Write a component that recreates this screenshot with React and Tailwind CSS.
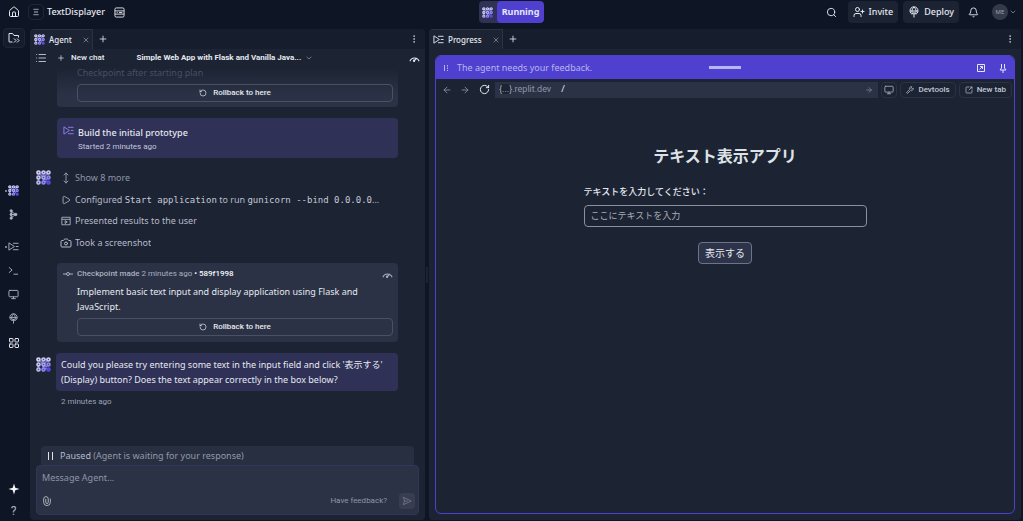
import {
  House, X, Plus, EllipsisVertical, List, ChevronDown, RotateCcw,
  MoveVertical, Play, Camera, Search, UserPlus, Bell, Monitor, LayoutGrid,
  ArrowLeft, ArrowRight, RotateCw, Wrench, SquareArrowOutUpRight,
} from "lucide-react";

const RINGS = [
  [4, 4, "#d5d7ea"], [12, 4, "#c9cbe8"], [20, 4, "#c9cbe8"],
  [4, 12, "#c9cbe8"], [12, 12, "#a9a7e6"], [20, 12, "#8f88ea"],
  [4, 20, "#b9bbe0"], [12, 20, "#8f88ea"], [20, 20, "#5a4be0"],
];

function AgentIcon({ className = "size-3" }) {
  return (
    <svg viewBox="0 0 24 24" className={className} fill="none" aria-hidden="true">
      <path d="M4 4l8 8M20 4l-8 8M12 12v8M12 12l8 8M4 12v8M12 4h8M12 20l8-8" stroke="#7b6ff0" strokeWidth="2.500" />
      {RINGS.map(([x, y, color]) => (
        <circle key={`${x}-${y}`} cx={x} cy={y} r="2.400" stroke={color} strokeWidth="2.600" fill="#4f40cf" />
      ))}
    </svg>
  );
}

function ProgressIcon({ className = "size-3" }) {
  return (
    <svg viewBox="0 0 24 24" className={className} fill="none" stroke="currentColor" strokeWidth="2" aria-hidden="true">
      <path d="M2 4v16l12-8zM11 5h12M17 12h6M11 19h12" />
    </svg>
  );
}

function DeployIcon({ className = "size-3" }) {
  return (
    <svg viewBox="0 0 24 24" className={className} fill="none" stroke="currentColor" strokeWidth="2" aria-hidden="true">
      <path d="M8 16.5A8 8 0 1 1 16 16.5M4 10h16M12 2c-5 5-5 10-2 15M12 2c5 5 5 10 2 15M12 13v10M9 16l3-3 3 3" />
    </svg>
  );
}

function GaugeIcon({ className = "size-2.5" }) {
  return (
    <svg viewBox="0 0 24 24" className={className} fill="none" stroke="currentColor" strokeWidth="2.200" aria-hidden="true">
      <path d="M2 18A10.500 10.500 0 0 1 22 18M11 17l6-6" />
      <circle cx="11" cy="17" r="1.500" />
    </svg>
  );
}

function StackIcon({ className = "size-3" }) {
  return (
    <svg viewBox="0 0 24 24" className={className} fill="none" stroke="currentColor" strokeWidth="2" aria-hidden="true">
      <rect x="2" y="2" width="20" height="20" rx="3" />
      <path d="M2 8.500h20M2 15.500h20M6 12h2M11 12h7" />
    </svg>
  );
}

function IconButton({ label, className = "", children }) {
  return (
    <button type="button" aria-label={label} className={`flex shrink-0 items-center justify-center ${className}`}>
      {children}
    </button>
  );
}

function Header() {
  return (
    <header className="grid h-6 grid-cols-[1fr_auto_1fr] items-center font-['Noto_Sans',sans-serif]">
      <div className="flex items-center pl-2">
        <IconButton label="Home" className="size-3"><House className="size-3" /></IconButton>
        <span className="ml-2 flex size-4 items-center justify-center rounded-sm border border-[#1f2636] text-[#7b8296]">
          <svg viewBox="0 0 12 12" className="size-2" fill="none" stroke="currentColor" strokeWidth="2"><path d="M2 2h8M3 6h6M2 10h8" /></svg>
        </span>
        <h1 className="ml-[3px] text-[9px] font-medium">TextDisplayer</h1>
        <IconButton label="Storage" className="ml-2 size-3"><StackIcon className="size-[11px]" /></IconButton>
      </div>
      <div className="flex h-[22px] overflow-hidden rounded bg-[#2f3157]">
        <IconButton label="Agent" className="w-[18px]"><AgentIcon className="size-[11px]" /></IconButton>
        <button type="button" className="rounded bg-[#4f40cf] px-[5px] text-[9px] font-bold text-[#e6e6fa]">Running</button>
      </div>
      <div className="flex items-center justify-end pr-1.5">
        <IconButton label="Search" className="size-3"><Search className="size-[11px]" /></IconButton>
        <button type="button" className="ml-2.5 flex h-[22px] items-center gap-1 rounded bg-[#1c2333] px-[5px] text-[9px] font-medium"><UserPlus className="size-3" />Invite</button>
        <button type="button" className="ml-[5px] flex h-[22px] items-center gap-1 rounded bg-[#1c2333] px-[5px] text-[9px] font-medium"><DeployIcon className="size-3" />Deploy</button>
        <IconButton label="Notifications" className="ml-2 size-3"><Bell className="size-[11px]" /></IconButton>
        <button type="button" aria-label="Account" className="ml-[13px] flex items-center gap-px text-[#9da2b3]">
          <span className="flex size-4 items-center justify-center rounded-full bg-[#353a4b] text-[6px]">ME</span>
          <ChevronDown className="size-2" />
        </button>
      </div>
    </header>
  );
}

function RailButton({ label, active, className = "h-6", children }) {
  return (
    <button type="button" aria-label={label} className={`flex w-full shrink-0 items-center justify-center gap-px text-[#aeb3c4] ${className}`}>
      <span className={`size-0.5 rounded-full ${active ? "bg-[#9da2b3]" : ""}`} />
      {children}
      <span className="size-0.5" />
    </button>
  );
}

function Rail() {
  return (
    <nav aria-label="Tools" className="flex w-[30px] shrink-0 flex-col pr-[3px]">
      <IconButton label="Files" className="ml-[3px] mt-1 h-5 w-[22px] rounded border border-[#1f2636] bg-[#151c2b]">
        <svg viewBox="0 0 24 24" className="size-3" fill="none" stroke="currentColor" strokeWidth="2"><path d="M9 20H3a1 1 0 0 1-1-1V3h7l3 4h9v4M12 13l4 4-4 4M18 13l4 4-4 4" /></svg>
      </IconButton>
      <div className="flex flex-1 flex-col justify-center pt-2">
        <RailButton label="Agent" active><AgentIcon className="size-[11px]" /></RailButton>
        <RailButton label="Integrations">
          <svg viewBox="0 0 24 24" className="size-[11px]" fill="none" stroke="currentColor" strokeWidth="2"><path d="M7 5v14M7 5l10 7-10 7M7 12h10" /><circle cx="7" cy="4" r="2.500" fill="currentColor" /><circle cx="7" cy="12" r="2.500" fill="currentColor" /><circle cx="7" cy="20" r="2.500" fill="currentColor" /><circle cx="17" cy="12" r="2.500" fill="currentColor" /></svg>
        </RailButton>
        <RailButton label="Progress" active className="mt-2 h-6"><ProgressIcon className="size-[11px]" /></RailButton>
        <RailButton label="Shell">
          <svg viewBox="0 0 24 24" className="size-[11px]" fill="none" stroke="currentColor" strokeWidth="2"><path d="M2 5l7 6-7 6M12 20h10" /></svg>
        </RailButton>
        <RailButton label="Preview"><Monitor className="size-[11px]" /></RailButton>
        <RailButton label="Deployments"><DeployIcon className="size-[11px]" /></RailButton>
        <RailButton label="All tools"><LayoutGrid className="size-3 text-[#dfe2ea]" /></RailButton>
      </div>
      <RailButton label="Assistant" className="h-6">
        <svg viewBox="0 0 24 24" className="size-3" fill="#f5f9fc"><path d="M12 1l2.500 8.500L23 12l-8.500 2.500L12 23l-2.500-8.500L1 12l8.500-2.500z" /></svg>
      </RailButton>
      <RailButton label="Help" className="h-5"><span className="text-[12px] leading-3">?</span></RailButton>
    </nav>
  );
}

function TabBar({ icon, label, menuLabel }) {
  return (
    <div className="flex h-5 shrink-0 items-stretch bg-[#161d2c]">
      <div className="flex items-center rounded-tl border-r border-t border-[#2b3245] bg-[#1c2333] pl-1">
        {icon}
        <span className="ml-1 font-['Noto_Sans',sans-serif] text-[8px] font-medium">{label}</span>
        <IconButton label={`Close ${label}`} className="ml-2 size-3 text-[#9da2b3]"><X className="size-2" /></IconButton>
      </div>
      <IconButton label="New tab" className="ml-1 w-3"><Plus className="size-2.5" /></IconButton>
      <IconButton label={menuLabel} className="ml-auto mr-[5px] w-3 text-[#c2c8cc]"><EllipsisVertical className="size-2.5" /></IconButton>
    </div>
  );
}

function Rollback() {
  return (
    <button type="button" className="flex h-[18px] w-full items-center justify-center gap-1.5 rounded-sm border border-[#4b5165] text-[8px] font-medium">
      <RotateCcw className="size-2" />Rollback to here
    </button>
  );
}

function Step({ icon, muted, children }) {
  return (
    <li className={`flex min-w-0 items-center gap-[3px] ${muted ? "text-[#8f95a8]" : "text-[#b6bac9]"}`}>
      <span className="flex w-3 shrink-0 justify-center">{icon}</span>
      <span className="truncate">{children}</span>
    </li>
  );
}

function AgentPane() {
  return (
    <section aria-label="Agent" className="flex min-w-0 flex-[395] flex-col overflow-hidden rounded bg-[#1c2333]">
      <TabBar icon={<AgentIcon className="size-[11px]" />} label="Agent" menuLabel="Agent pane menu" />
      <div className="flex h-[18px] shrink-0 items-center px-[5px] text-[8px] font-medium">
        <IconButton label="Chat list" className="size-3 text-[#b6bac9]"><List className="size-3" /></IconButton>
        <button type="button" className="ml-2.5 flex items-center gap-1.5"><Plus className="size-2" />New chat</button>
        <button type="button" className="ml-8 flex items-center gap-1 font-bold">Simple Web App with Flask and Vanilla Java...<ChevronDown className="size-2 text-[#9da2b3]" /></button>
        <IconButton label="Usage" className="ml-auto size-3"><GaugeIcon className="size-[11px]" /></IconButton>
      </div>

      <div className="flex min-h-0 flex-1 flex-col overflow-hidden pl-1.5 pr-[27px]">
        <article className="ml-[21px] rounded-b-sm bg-linear-to-b from-[#1c2333] to-[#2b3245] to-70% pb-[5px] pl-5 pr-[5px]">
          <p className="h-[17px] font-['Noto_Sans',sans-serif] text-[9px] leading-3 text-[#484f64]">Checkpoint after starting plan</p>
          <Rollback />
        </article>

        <article className="ml-[21px] mt-[11px] flex h-10 gap-1 rounded-sm bg-[#2f3157] px-1.5 pt-[7px]">
          <ProgressIcon className="size-[11px] shrink-0 text-[#8d87e8]" />
          <div>
            <h2 className="font-['Noto_Sans',sans-serif] text-[9px] font-medium leading-[15px]">Build the initial prototype</h2>
            <p className="text-[8px] leading-[14px] text-[#c2c8d8]">Started 2 minutes ago</p>
          </div>
        </article>

        <div className="mt-3 flex gap-[9px]">
          <AgentIcon className="size-[15px] shrink-0" />
          <ul className="grid h-[86px] min-w-0 flex-1 grid-rows-4 items-start font-['Noto_Sans',sans-serif] text-[9px] leading-4">
            <Step muted icon={<MoveVertical className="size-3" />}>Show 8 more</Step>
            <Step icon={<Play className="size-2.5" />}>Configured <code className="font-['DejaVu_Sans_Mono',monospace] text-[#c6cad8]">Start application</code> to run <code className="font-['DejaVu_Sans_Mono',monospace] text-[#c6cad8]">gunicorn --bind 0.0.0.0</code>...</Step>
            <Step icon={<svg viewBox="0 0 24 24" className="size-2.5" fill="none" stroke="currentColor" strokeWidth="2"><path d="M2 3h20v18H2zM2 8h20M10 11v7l5-3.500z" /></svg>}>Presented results to the user</Step>
            <Step icon={<Camera className="size-3" />}>Took a screenshot</Step>
          </ul>
        </div>

        <article className="ml-[21px] mt-[7px] h-[79px] rounded-sm bg-[#2b3245] pl-1.5 pr-[5px] pt-1">
          <div className="flex h-[14px] items-center gap-1 text-[8px] text-[#aab0c0]">
            <svg viewBox="0 0 10 10" className="size-2.5" fill="none" stroke="currentColor"><circle cx="5" cy="5" r="1.500" /><path d="M0 5h3.500M6.500 5H10" /></svg>
            <p><span className="font-medium">Checkpoint made</span> 2 minutes ago <span className="font-medium text-[#f5f9fc]">• 589f1998</span></p>
            <GaugeIcon className="ml-auto size-[11px]" />
          </div>
          <div className="pl-[14px]">
            <p className="mb-1 mt-[3px] font-['Noto_Sans',sans-serif] text-[9px] leading-[15px]">Implement basic text input and display application using Flask and JavaScript.</p>
            <Rollback />
          </div>
        </article>

        <div className="mt-[11px] flex gap-[5px]">
          <AgentIcon className="mt-1 size-[15px] shrink-0" />
          <p className="flex-1 rounded-sm bg-[#2f3157] px-[5px] py-1 font-['Noto_Sans','Noto_Sans_CJK_JP',sans-serif] text-[9px] leading-[15px]">
            Could you please try entering some text in the input field and click '表示する' (Display) button? Does the text appear correctly in the box below?
          </p>
        </div>
        <p className="ml-[25px] mt-1 text-[8px] leading-[14px] text-[#9da2b3]">2 minutes ago</p>
      </div>

      <div className="px-1.5 pb-[5px]">
        <div className="mx-[5px] flex h-[19px] items-center gap-[5px] rounded-t-sm bg-[#282f41] px-1.5 font-['Noto_Sans',sans-serif] text-[9px] text-[#9298ab]">
          <svg viewBox="0 0 8 8" className="size-2" stroke="#dfe2ea"><path d="M1.500 0v8M5.500 0v8" /></svg>
          <p><span className="text-[#b6bac9]">Paused</span> (Agent is waiting for your response)</p>
        </div>
        <form className="flex h-[50px] flex-col rounded border border-[#31355a] bg-[#2b3245] pl-[5px] pr-[3px] pt-[3px]">
          <input aria-label="Message Agent" placeholder="Message Agent..." className="h-4 bg-transparent font-['Noto_Sans',sans-serif] text-[9px] outline-none placeholder:text-[#8f95a8]" />
          <div className="mt-2 flex items-center">
            <IconButton label="Attach file" className="size-2.5 text-[#c2c8cc]">
              <svg viewBox="0 0 24 24" className="size-2.5" fill="none" stroke="currentColor" strokeWidth="2"><path d="M20 6v9a8 8 0 0 1-16 0V7a5 5 0 0 1 11 0v8a3 3 0 0 1-6 0V7" /></svg>
            </IconButton>
            <a href="#feedback" className="ml-auto text-[8px] text-[#8f95a8]">Have feedback?</a>
            <IconButton label="Send" className="ml-3 size-4 rounded-sm bg-[#383e50] text-[#757b8f]">
              <svg viewBox="0 0 24 24" className="size-2.5" fill="none" stroke="currentColor" strokeWidth="2"><path d="M3 3l19 9-19 9 3-9zM6 12h8" /></svg>
            </IconButton>
          </div>
        </form>
      </div>
    </section>
  );
}

function Preview() {
  return (
    <main className="flex flex-1 flex-col items-center px-4 pt-[45px] font-['Liberation_Sans','Noto_Sans_CJK_JP',sans-serif]">
      <h2 className="text-[16px] font-bold leading-6 text-[#dee2e6]">テキスト表示アプリ</h2>
      <div className="mt-[15px] w-[283px] max-w-full">
        <label htmlFor="entry" className="block text-[9px] font-medium leading-4">テキストを入力してください：</label>
        <input id="entry" placeholder="ここにテキストを入力" className="mt-[5px] block h-[22px] w-full rounded-sm border border-[#8b909c] bg-transparent px-1.5 text-[9px] outline-none placeholder:text-[#a9aeb9]" />
      </div>
      <button type="button" className="mt-[15px] h-[22px] rounded-sm border border-[#6d7388] bg-[#2d3349] px-1.5 text-[10px]">表示する</button>
    </main>
  );
}

function ProgressPane() {
  return (
    <section aria-label="Progress" className="flex min-w-0 flex-[592] flex-col overflow-hidden rounded bg-[#1c2333]">
      <TabBar icon={<ProgressIcon className="size-[11px]" />} label="Progress" menuLabel="Progress pane menu" />
      <div className="m-1.5 flex flex-1 flex-col overflow-hidden rounded-md border border-[#4f40cf]">
        <div className="grid h-[23px] shrink-0 grid-cols-[1fr_auto_1fr] items-center bg-[#4f40cf] px-1.5 font-['Noto_Sans',sans-serif] text-[9px] text-[#b9b5ee]">
          <div className="flex items-center gap-[7px]">
            <svg viewBox="0 0 8 8" className="size-2" fill="none" stroke="currentColor"><path d="M2.500 1v6" /><path d="M5.500 1v6" strokeDasharray="1.500 1" /></svg>
            The agent needs your feedback.
          </div>
          <span className="h-[3px] w-8 bg-[#b9b5ee]" />
          <div className="flex justify-end gap-3 text-[#e6e6fa]">
            <IconButton label="Open in pane" className="size-2.5">
              <svg viewBox="0 0 10 10" className="size-2.5" fill="none" stroke="currentColor"><path d="M1.500 1.500h7v7h-7zM3.500 6.500l3-3M4 3.500h2.500V6" /></svg>
            </IconButton>
            <IconButton label="Pin" className="size-2.5">
              <svg viewBox="0 0 10 10" className="size-2.5" fill="none" stroke="currentColor"><path d="M3.500 1v4L2 7h6L6.500 5V1M5 7v3" /></svg>
            </IconButton>
          </div>
        </div>
        <div className="flex h-[21px] shrink-0 items-center pl-1.5 pr-0.5 text-[8px] text-[#c2c8d8]">
          <IconButton label="Back" className="w-2.5 text-[#8f95a8]"><ArrowLeft className="size-2.5" /></IconButton>
          <IconButton label="Forward" className="ml-2 w-2.5 text-[#8f95a8]"><ArrowRight className="size-2.5" /></IconButton>
          <IconButton label="Reload" className="ml-2 w-3 text-[#f5f9fc]"><RotateCw className="size-[11px]" /></IconButton>
          <div className="ml-[5px] flex h-4 min-w-0 flex-1 items-center bg-[#2b3245] px-1 text-[9px]">
            <span className="text-[#8f95a8]"><span className="rounded-sm bg-[#1c2333] text-[#aab0c0]">{"{...}"}</span>.replit.dev</span>
            <input aria-label="Path" defaultValue="/" className="ml-2.5 min-w-0 flex-1 bg-transparent text-[#f5f9fc] outline-none" />
            <IconButton label="Go" className="size-2.5 text-[#8f95a8]"><ArrowRight className="size-2" /></IconButton>
          </div>
          <IconButton label="Device size" className="ml-[3px] size-4 rounded border border-[#2b3245] text-[#aab0c0]"><Monitor className="size-2.5" /></IconButton>
          <button type="button" className="ml-[3px] flex h-4 items-center gap-1 rounded border border-[#2b3245] px-[5px] font-medium"><Wrench className="size-2 -scale-x-100 rotate-90" />Devtools</button>
          <button type="button" className="ml-[3px] flex h-4 items-center gap-1 rounded border border-[#2b3245] px-[5px] font-medium"><SquareArrowOutUpRight className="size-2" />New tab</button>
        </div>
        <Preview />
      </div>
    </section>
  );
}

export default function App() {
  return (
    <div className="flex h-screen flex-col bg-[#0e1525] font-[Roboto,'Noto_Sans_CJK_JP',sans-serif] text-[#e6e9f0]">
      <Header />
      <div className="flex min-h-0 flex-1">
        <Rail />
        <div className="flex min-w-0 flex-1 pb-px pr-0.5 pt-[5px]">
          <AgentPane />
          <div role="separator" aria-orientation="vertical" className="flex w-1 shrink-0 items-center justify-center">
            <span className="h-4 w-0.5 bg-[#1c2333]" />
          </div>
          <ProgressPane />
        </div>
      </div>
    </div>
  );
}
